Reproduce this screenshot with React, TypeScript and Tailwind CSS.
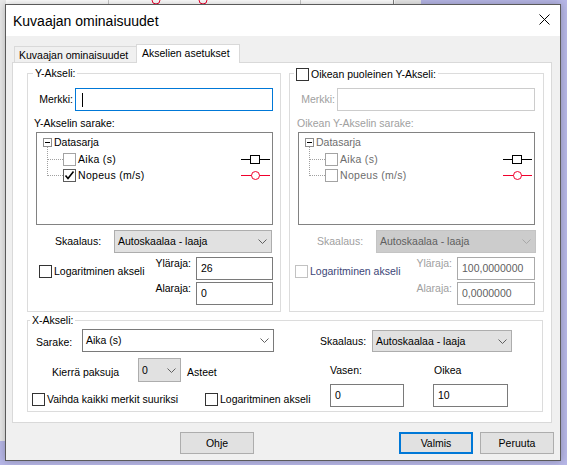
import React from 'react';

type Tone = 'dark' | 'tree' | 'treeOn' | 'off';

const boxBorder: Record<Tone, string> = {
  dark: 'border-[#333333]',
  tree: 'border-[#a3a3a3]',
  treeOn: 'border-[#5c5c5c]',
  off: 'border-[#c2c2c2]',
};

const CheckBox = ({ tone, checked }: { tone: Tone; checked?: boolean }) => (
  <span className={`flex w-[13px] h-[13px] shrink-0 items-center justify-center border bg-white ${boxBorder[tone]}`}>
    {checked && (
      <svg width="11" height="11" viewBox="0 0 11 11">
        <polyline points="1.5,5.5 4,8.5 9.5,1.5" fill="none" stroke="#000" strokeWidth="1.6" />
      </svg>
    )}
  </span>
);

const Chevron = ({ color }: { color: string }) => (
  <svg width="9" height="5" viewBox="0 0 9 5" className="shrink-0">
    <polyline points="0.5,0.5 4.5,4.5 8.5,0.5" fill="none" stroke={color} strokeWidth="1" />
  </svg>
);

const Select = ({
  className,
  value,
  textClass = 'text-black',
  chevron = '#606060',
}: {
  className: string;
  value: string;
  textClass?: string;
  chevron?: string;
}) => (
  <div className={`flex items-center justify-between border pl-[3px] pr-[4px] ${className}`}>
    <span className={textClass}>{value}</span>
    <Chevron color={chevron} />
  </div>
);

const Field = ({ className, value, textClass = 'text-black' }: { className: string; value?: string; textClass?: string }) => (
  <div className={`flex items-center border bg-white pl-[4px] ${className}`}>
    <span className={textClass}>{value}</span>
  </div>
);

const Group = ({
  className,
  legendClass,
  legend,
  children,
}: {
  className: string;
  legendClass: string;
  legend: React.ReactNode;
  children: React.ReactNode;
}) => (
  <div className={`relative border border-[#dcdcdc] ${className}`}>
    <div className={`absolute flex h-[13px] items-center bg-white px-[2px] ${legendClass}`}>{legend}</div>
    {children}
  </div>
);

const AikaLegend = () => (
  <svg width="29" height="9" viewBox="0 0 29 9">
    <line x1="0" y1="4.5" x2="29" y2="4.5" stroke="#000" strokeWidth="1" />
    <rect x="9.5" y="0.5" width="9" height="8" fill="#fff" stroke="#000" strokeWidth="1" />
  </svg>
);

const NopeusLegend = () => (
  <svg width="29" height="9" viewBox="0 0 29 9">
    <line x1="0" y1="4.5" x2="29" y2="4.5" stroke="#f0002c" strokeWidth="1" />
    <circle cx="14.5" cy="4.5" r="4" fill="#fff" stroke="#f0002c" strokeWidth="1" />
  </svg>
);

const Tree = ({ disabled }: { disabled?: boolean }) => {
  const txt = disabled ? 'text-[#6d6d6d]' : 'text-black';
  return (
    <div className="relative mt-[2px] ml-[8px] w-[237px] h-[93px] border border-[#828282] bg-white">
      <svg className="absolute left-[10px] top-[14px]" width="16" height="29" viewBox="0 0 16 29">
        <line x1="0.5" y1="0" x2="0.5" y2="29" stroke="#a0a0a0" strokeWidth="1" strokeDasharray="1 1" />
        <line x1="1" y1="12.5" x2="16" y2="12.5" stroke="#a0a0a0" strokeWidth="1" strokeDasharray="1 1" />
        <line x1="1" y1="28.5" x2="16" y2="28.5" stroke="#a0a0a0" strokeWidth="1" strokeDasharray="1 1" />
      </svg>
      <div className="mt-[1px] flex h-[17px] items-center pl-[6px]">
        <span className="flex w-[9px] h-[9px] items-center justify-center border border-[#8e8e8e] bg-white">
          <span className="w-[5px] h-px bg-black" />
        </span>
        <span className={`ml-[2px] ${txt}`}>Datasarja</span>
      </div>
      <div className="flex h-[16px] items-center pl-[26px] pr-[2px]">
        <CheckBox tone="tree" />
        <span className={`ml-[2px] tracking-[0.3px] ${txt}`}>Aika (s)</span>
        <span className="ml-auto flex">
          <AikaLegend />
        </span>
      </div>
      <div className="flex h-[16px] items-center pl-[26px] pr-[2px]">
        <CheckBox tone={disabled ? 'tree' : 'treeOn'} checked={!disabled} />
        <span className={`ml-[2px] tracking-[0.3px] ${txt}`}>Nopeus (m/s)</span>
        <span className="ml-auto flex">
          <NopeusLegend />
        </span>
      </div>
    </div>
  );
};

const Btn = ({ className = 'border border-[#adadad]', children }: { className?: string; children: React.ReactNode }) => (
  <div className={`flex w-[74px] h-[22px] items-center justify-center bg-[#e1e1e1] ${className}`}>{children}</div>
);

export default function App() {
  return (
    <div className="relative w-[567px] h-[465px] overflow-hidden bg-[#b7b7e7] font-['Liberation_Sans',Arial,sans-serif] text-[10.5px] leading-[13px] text-black">
      {/* window behind the dialog */}
      <div className="absolute left-0 top-0 w-[421px] h-[441px] bg-[#e9e9e9]">
        <div className="ml-[6px] flex h-[6px] w-[389px] bg-white">
          <div className="ml-[102px] w-px bg-[#c8c8c8]" />
          <svg width="60" height="6" viewBox="0 0 60 6" className="ml-[40px]">
            <circle cx="7" cy="0" r="4" fill="none" stroke="#f0002c" strokeWidth="1" />
            <circle cx="54" cy="0" r="4" fill="none" stroke="#f0002c" strokeWidth="1" />
          </svg>
          <div className="ml-[91px] w-px bg-[#c8c8c8]" />
          <div className="ml-[92px] w-px bg-[#808080]" />
        </div>
      </div>

      {/* dialog */}
      <div className="absolute left-[5px] top-[4px] flex w-[556px] h-[457px] flex-col border border-[#5a5a5a] bg-[#f0f0f0] shadow-[0_0_8px_rgba(0,0,0,0.25)]">
        <div className="flex h-[31px] items-center justify-between bg-white pl-[7px] pr-[10px]">
          <span className="text-[14px] leading-[16px]">Kuvaajan ominaisuudet</span>
          <svg width="11" height="11" viewBox="0 0 11 11" className="mb-[3px]">
            <path d="M0.5 0.5 L10.5 10.5 M10.5 0.5 L0.5 10.5" stroke="#000" strokeWidth="1" />
          </svg>
        </div>

        {/* tabs */}
        <div className="relative z-10 mt-[8px] ml-[6px] flex h-[18px] items-end">
          <div className="ml-[2px] h-[16px] w-[122px] border-t border-l border-[#d9d9d9] bg-[#f0f0f0] pl-[4px] pt-[2px]">
            Kuvaajan ominaisuudet
          </div>
          <div className="-mb-[1px] h-[19px] w-[104px] border-t border-l border-r border-[#d9d9d9] bg-white pl-[5px] pt-[2px]">
            Akselien asetukset
          </div>
        </div>

        <div className="ml-[6px] flex w-[540px] h-[361px] flex-col border border-[#d9d9d9] bg-white pl-[14px]">
          <div className="mt-[10px] flex gap-[8px]">
            {/* left Y axis */}
            <Group className="flex w-[254px] h-[239px] flex-col" legendClass="-top-[7px] left-[5px]" legend={<span>Y-Akseli:</span>}>
              <div className="mt-[14px] flex">
                <span className="w-[47px] self-center pr-[2px] text-right">Merkki:</span>
                <div className="flex w-[198px] h-[23px] items-center border border-[#0078d7] bg-white pl-[6px]">
                  <span className="w-px h-[14px] bg-black" />
                </div>
              </div>
              <div className="mt-[6px] pl-[6px]">Y-Akselin sarake:</div>
              <Tree />
              <div className="mt-[5px] flex items-center">
                <span className="w-[86px] pl-[27px]">Skaalaus:</span>
                <Select className="w-[158px] h-[23px] bg-[#e1e1e1] border-[#adadad]" value="Autoskaalaa - laaja" />
              </div>
              <div className="mt-[4px] flex pr-[7px]">
                <div className="ml-[11px] mt-[8px] flex h-[13px] items-center">
                  <CheckBox tone="dark" />
                  <span className="ml-[2px]">Logaritminen akseli</span>
                </div>
                <div className="ml-auto flex flex-col">
                  <div className="flex items-start justify-end">
                    <span className="mr-[5px]">Yläraja:</span>
                    <Field className="w-[77px] h-[23px] border-[#7a7a7a]" value="26" />
                  </div>
                  <div className="mt-[2px] flex items-start justify-end">
                    <span className="mr-[5px]">Alaraja:</span>
                    <Field className="w-[77px] h-[23px] border-[#7a7a7a]" value="0" />
                  </div>
                </div>
              </div>
            </Group>

            {/* right Y axis */}
            <Group
              className="flex w-[255px] h-[239px] flex-col"
              legendClass="-top-[6px] left-[4px]"
              legend={
                <>
                  <CheckBox tone="dark" />
                  <span className="ml-[2px]">Oikean puoleinen Y-Akseli:</span>
                </>
              }
            >
              <div className="mt-[14px] flex">
                <span className="w-[47px] self-center pr-[2px] text-right text-[#a0a0a0]">Merkki:</span>
                <Field className="w-[198px] h-[23px] border-[#cccccc]" />
              </div>
              <div className="mt-[6px] pl-[7px] text-[#a0a0a0]">Oikean Y-Akselin sarake:</div>
              <Tree disabled />
              <div className="mt-[5px] flex items-center">
                <span className="w-[86px] pl-[27px] text-[#a0a0a0]">Skaalaus:</span>
                <Select
                  className="w-[160px] h-[23px] bg-[#cccccc] border-[#c4c4c4]"
                  value="Autoskaalaa - laaja"
                  textClass="text-[#5f5f5f]"
                  chevron="#a8a8a8"
                />
              </div>
              <div className="mt-[4px] flex pr-[8px]">
                <div className="ml-[5px] mt-[8px] flex h-[13px] items-center">
                  <CheckBox tone="off" />
                  <span className="ml-[2px] text-[#3c4677]">Logaritminen akseli</span>
                </div>
                <div className="ml-auto flex flex-col">
                  <div className="flex items-start justify-end">
                    <span className="mr-[5px] text-[#a0a0a0]">Yläraja:</span>
                    <Field className="w-[78px] h-[23px] border-[#aaaaaa]" value="100,0000000" textClass="text-[#5f5f5f]" />
                  </div>
                  <div className="mt-[2px] flex items-start justify-end">
                    <span className="mr-[5px] text-[#a0a0a0]">Alaraja:</span>
                    <Field className="w-[78px] h-[23px] border-[#aaaaaa]" value="0,0000000" textClass="text-[#5f5f5f]" />
                  </div>
                </div>
              </div>
            </Group>
          </div>

          {/* X axis */}
          <Group className="mt-[8px] flex w-[516px] h-[92px]" legendClass="-top-[7px] left-[2px]" legend={<span>X-Akseli:</span>}>
            <div className="flex w-[292px] flex-col">
              <div className="mt-[8px] flex items-center">
                <span className="w-[54px] pl-[8px] pt-[3px]">Sarake:</span>
                <Select className="w-[192px] h-[23px] bg-white border-[#7a7a7a]" value="Aika (s)" />
              </div>
              <div className="mt-[6px] flex items-center">
                <span className="w-[110px] pl-[24px] pt-[4px]">Kierrä paksuja</span>
                <Select className="w-[43px] h-[24px] bg-[#e1e1e1] border-[#adadad]" value="0" />
                <span className="ml-[6px] pt-[4px]">Asteet</span>
              </div>
              <div className="mt-[11px] flex items-center">
                <div className="flex w-[177px] items-center pl-[4px]">
                  <CheckBox tone="dark" />
                  <span className="ml-[2px]">Vaihda kaikki merkit suuriksi</span>
                </div>
                <CheckBox tone="dark" />
                <span className="ml-[2px]">Logaritminen akseli</span>
              </div>
            </div>
            <div className="flex flex-col">
              <div className="mt-[9px] flex items-center">
                <span className="w-[52px]">Skaalaus:</span>
                <Select className="w-[140px] h-[22px] bg-[#e1e1e1] border-[#adadad]" value="Autoskaalaa - laaja" />
              </div>
              <div className="mt-[12px] ml-[10px] grid grid-cols-[103px_75px]">
                <span>Vasen:</span>
                <span className="pl-[1px]">Oikea</span>
                <Field className="mt-[7px] w-[74px] h-[23px] border-[#7a7a7a]" value="0" />
                <Field className="mt-[7px] w-[75px] h-[23px] border-[#7a7a7a]" value="10" />
              </div>
            </div>
          </Group>
        </div>

        {/* buttons */}
        <div className="mt-[9px] flex h-[22px] pl-[174px]">
          <Btn>Ohje</Btn>
          <Btn className="ml-[145px] border-2 border-[#0078d7]">Valmis</Btn>
          <Btn className="ml-[7px] border border-[#adadad]">Peruuta</Btn>
        </div>
      </div>
    </div>
  );
}
